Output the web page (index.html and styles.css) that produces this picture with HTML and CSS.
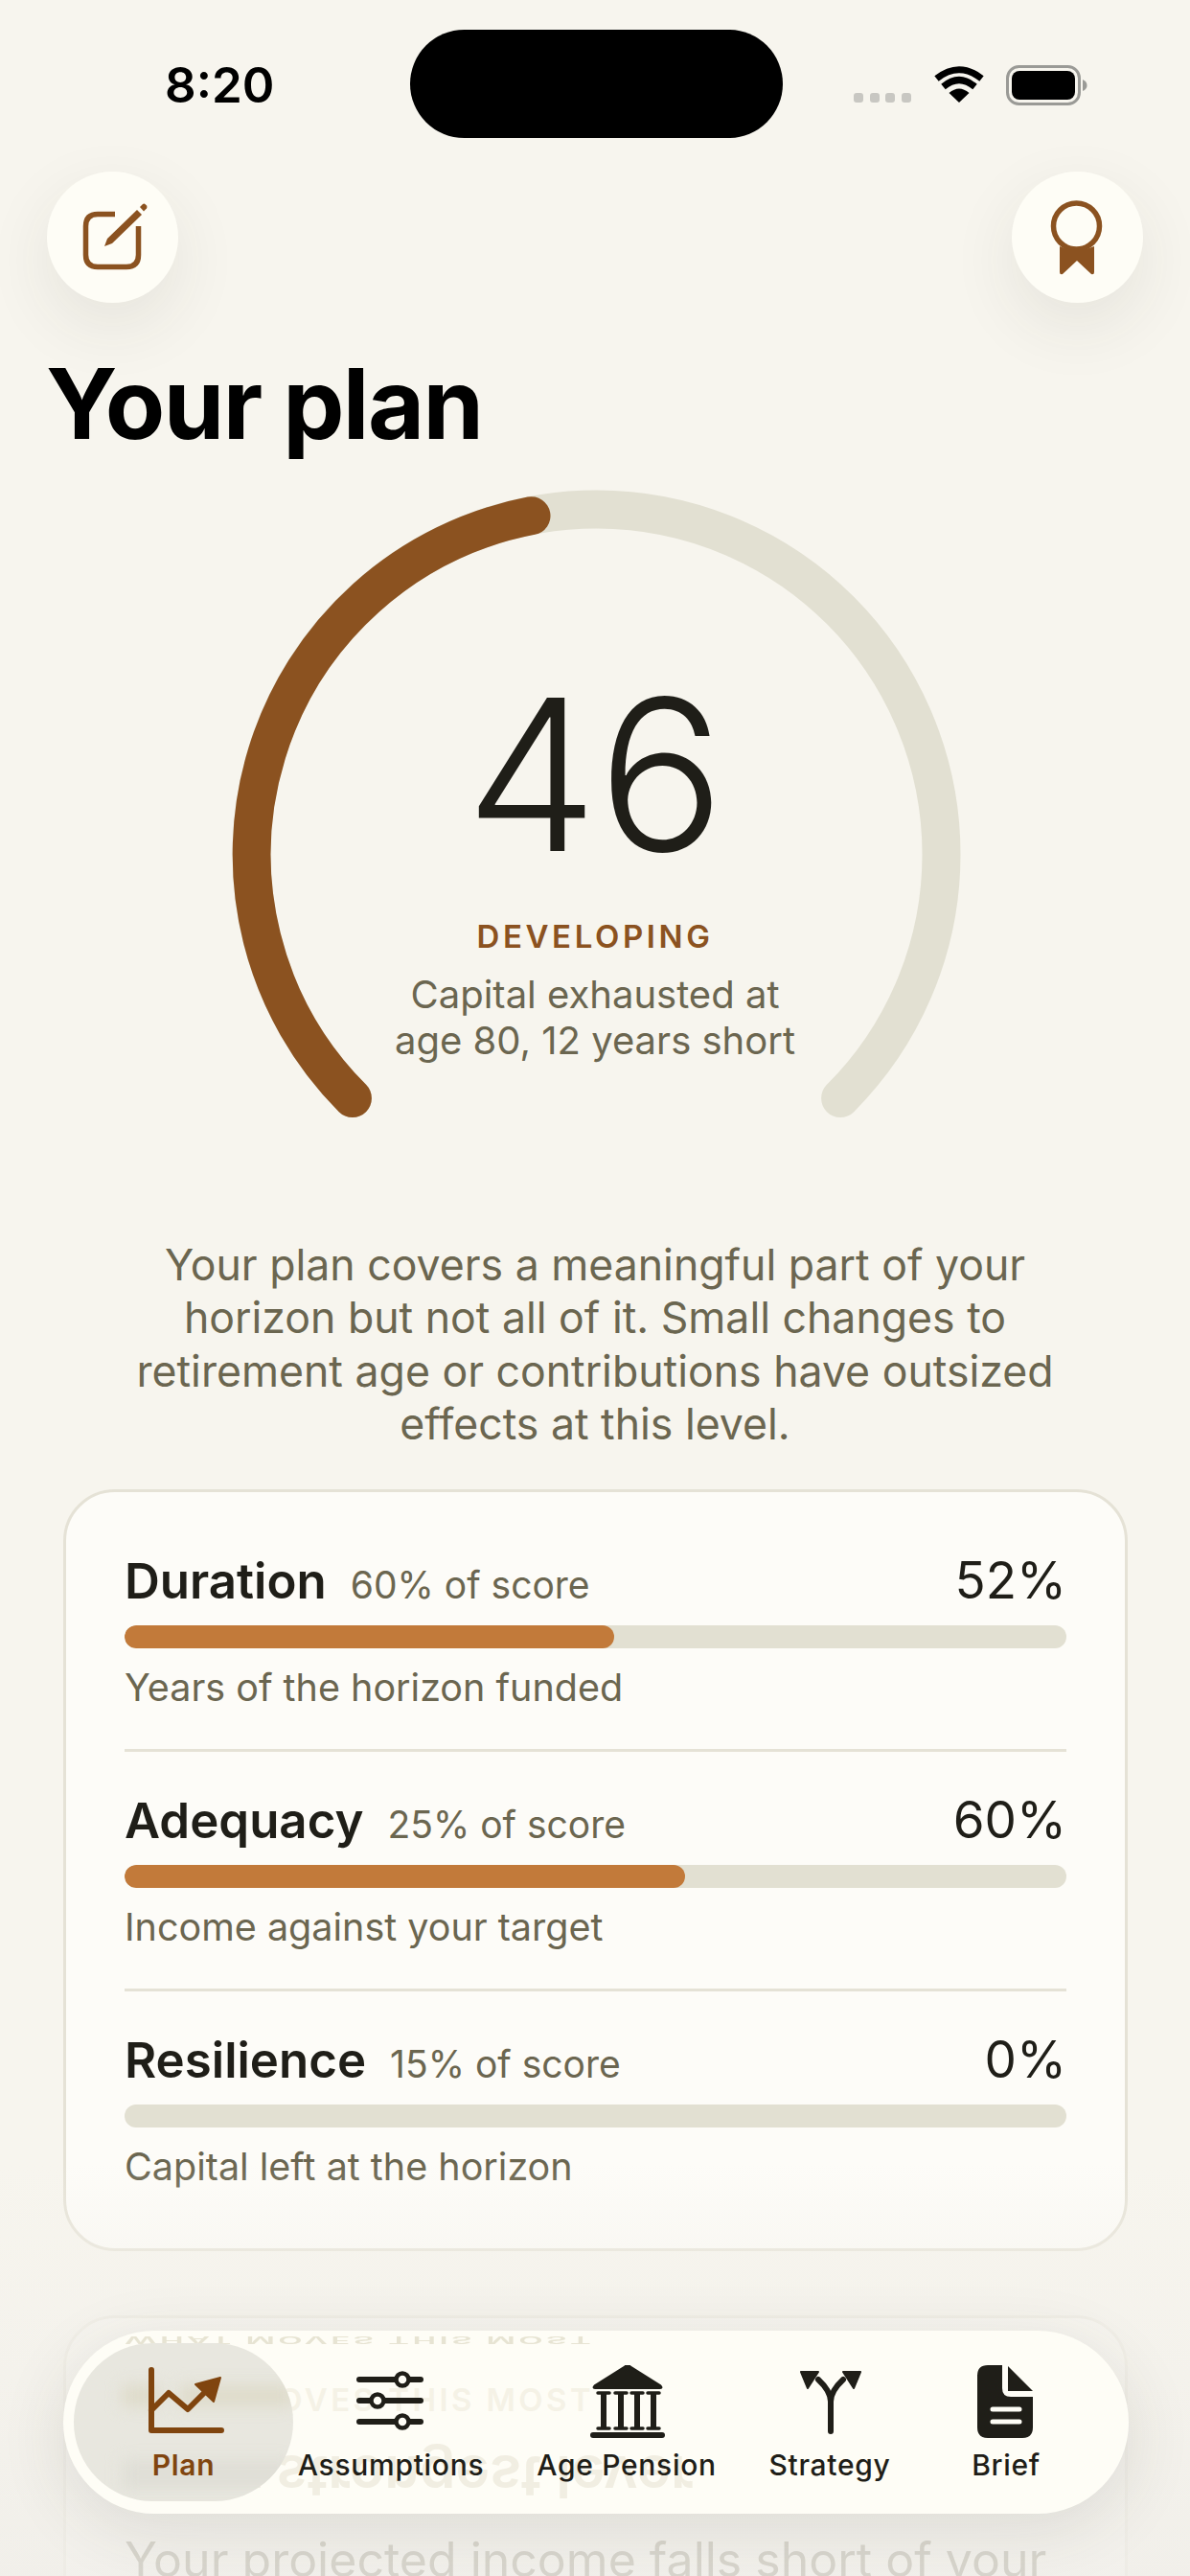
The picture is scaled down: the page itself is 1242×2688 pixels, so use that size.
FILE: index.html
```html
<!DOCTYPE html>
<html lang="en">
<head>
<meta charset="utf-8">
<title>Your plan</title>
<link rel="stylesheet" href="styles.css">
</head>
<body>
<div class="screen">
  <header class="status">
    <div class="time">8:20</div>
    <div class="island"></div>
    <div class="status-right">
      <div class="signal"><i></i><i></i><i></i><i></i></div>
      <svg class="wifi" width="54" height="40" viewBox="0 0 54 40">
        <path d="M27 38 L16.500 28 Q27 19 37.500 28 Z" fill="#000"/>
        <path d="M10.500 21.500 Q27 7.500 43.500 21.500" fill="none" stroke="#000" stroke-width="7"/>
        <path d="M3.500 13 Q27 -5.500 50.500 13" fill="none" stroke="#000" stroke-width="7"/>
      </svg>
      <svg class="battery" width="86" height="42" viewBox="0 0 86 42">
        <rect x="1.500" y="1.500" width="75" height="39" rx="12" fill="none" stroke="#9a9a96" stroke-width="3"/>
        <rect x="6" y="6" width="66" height="30" rx="8" fill="#000"/>
        <path d="M80 15 Q84.500 17 84.500 21 Q84.500 25 80 27 Z" fill="#9a9a96"/>
      </svg>
    </div>
  </header>

  <div class="actions">
    <button class="round-btn" aria-label="Edit">
      <svg width="137" height="137" viewBox="0 0 137 137">
        <path d="M71 44.500 H53 Q40.500 44.500 40.500 57 V87 Q40.500 99.500 53 99.500 H83 Q95.500 99.500 95.500 87 V57" fill="none" stroke="#8b5220" stroke-width="5.500"/>
        <path d="M60 78 L63 70 L94 40 L99 45 L68 75 Z" fill="#8b5220"/>
        <path d="M97 37 L100 34 Q101.500 33 103 34.500 L104 35.500 Q105 37 104 38.500 L101 41.500 Z" fill="#8b5220"/>
      </svg>
    </button>
    <button class="round-btn" aria-label="Achievements">
      <svg width="137" height="137" viewBox="0 0 137 137">
        <circle cx="67.500" cy="57" r="24" fill="none" stroke="#8b5220" stroke-width="5.500"/>
        <path d="M50 78 Q67.500 86 86 78 V105 Q86 108 83 107 L68 93 L53 107 Q50 108 50 105 Z" fill="#8b5220"/>
      </svg>
    </button>
  </div>

  <h1 class="title">Your plan</h1>

  <section class="gauge">
    <svg class="gauge-ring" width="800" height="700" viewBox="0 0 800 700">
      <path class="ring-track" d="M146.900 656 A360 360 0 1 1 656.100 656"/>
      <path class="ring-value" d="M146.900 656 A360 360 0 0 1 333.500 48.200"/>
    </svg>
    <div class="gauge-text">
      <div class="score">46</div>
      <div class="band">DEVELOPING</div>
      <div class="gauge-note">Capital exhausted at<br>age 80, 12 years short</div>
    </div>
  </section>

  <p class="summary">Your plan covers a meaningful part of your horizon but not all of it. Small changes to retirement age or contributions have outsized effects at this level.</p>

  <section class="card breakdown">
    <div class="row">
      <div class="row-head"><span class="row-name">Duration</span><span class="row-weight">60% of score</span><span class="row-value">52%</span></div>
      <div class="bar"><div class="bar-fill" style="width:52%"></div></div>
      <div class="row-desc">Years of the horizon funded</div>
    </div>
    <div class="row">
      <div class="row-head"><span class="row-name">Adequacy</span><span class="row-weight">25% of score</span><span class="row-value">60%</span></div>
      <div class="bar"><div class="bar-fill" style="width:59.500%"></div></div>
      <div class="row-desc">Income against your target</div>
    </div>
    <div class="row">
      <div class="row-head"><span class="row-name">Resilience</span><span class="row-weight">15% of score</span><span class="row-value">0%</span></div>
      <div class="bar"></div>
      <div class="row-desc">Capital left at the horizon</div>
    </div>
  </section>

  <section class="card lever">
    <div class="lever-label">WHAT MOVES THIS MOST</div>
    <h2 class="lever-title">Your strongest lever</h2>
    <p class="lever-body">Your projected income falls short of your</p>
  </section>

  <div class="fade"></div>

  <nav class="tabbar">
    <span class="ghost ghost-top" aria-hidden="true">WHAT MOVES THIS MOST</span>
    <span class="ghost ghost-mid" aria-hidden="true">WHAT MOVES THIS MOST</span>
    <span class="ghost ghost-low" aria-hidden="true">Your strongest lever</span>
    <div class="active-pill">
      <i class="smudge smudge-a"></i>
      <i class="smudge smudge-b"></i>
      <i class="smudge smudge-c"></i>
    </div>
    <a class="tab tab-active">
      <svg width="90" height="84" viewBox="0 0 90 84">
        <path d="M11 5 V68 H84" fill="none" stroke="#80450f" stroke-width="6" stroke-linecap="round" stroke-linejoin="round"/>
        <path d="M11 47 L29 29 L49 46 L69 26" fill="none" stroke="#80450f" stroke-width="6" stroke-linejoin="round" stroke-linecap="round"/>
        <path d="M57 20 L83 13 L76 38 Z" fill="#80450f" stroke="#80450f" stroke-width="2" stroke-linejoin="round"/>
      </svg>
      <span class="tab-label">Plan</span>
    </a>
    <a class="tab">
      <svg width="90" height="84" viewBox="0 0 90 84">
        <g stroke="#1f1e18" stroke-width="6" stroke-linecap="round">
          <path d="M12 15 H76"/><path d="M12 37 H76"/><path d="M12 59 H76"/>
        </g>
        <g fill="#fefdf6" stroke="#1f1e18" stroke-width="4.500">
          <circle cx="57" cy="15" r="6.500"/><circle cx="31" cy="37" r="6.500"/><circle cx="57" cy="59" r="6.500"/>
        </g>
      </svg>
      <span class="tab-label">Assumptions</span>
    </a>
    <a class="tab">
      <svg width="90" height="84" viewBox="0 0 90 84">
        <path d="M46 0 Q47 0 49 1.500 L80 21 Q83 24 80 24 H12 Q9 24 12 21 L43 1.500 Q45 0 46 0 Z" fill="#1f1e18" stroke="#1f1e18" stroke-width="2" stroke-linejoin="round"/>
        <g fill="none" stroke="#1f1e18">
          <path stroke-width="6" d="M21 28 V66 M39 28 V66 M56 28 V66 M73 28 V66"/>
          <path stroke-width="3.500" stroke-linecap="round" d="M15 29 H27 M33 29 H45 M50 29 H62 M67 29 H79 M15 66 H27 M33 66 H45 M50 66 H62 M67 66 H79"/>
          <path stroke-width="6" stroke-linecap="round" d="M10 73 H82"/>
        </g>
      </svg>
      <span class="tab-label">Age Pension</span>
    </a>
    <a class="tab">
      <svg width="90" height="84" viewBox="0 0 90 84">
        <path d="M46 69 V38 Q46 27 33 15 M46 38 Q46 27 59 15" fill="none" stroke="#1f1e18" stroke-width="6" stroke-linecap="round"/>
        <path d="M15 7 H33 L22 24 Z M77 7 H59 L70 24 Z" fill="#1f1e18" stroke="#1f1e18" stroke-width="2" stroke-linejoin="round"/>
      </svg>
      <span class="tab-label">Strategy</span>
    </a>
    <a class="tab">
      <svg width="90" height="84" viewBox="0 0 90 84">
        <path d="M26 0 H41 V24 Q41 33 50 33 H73 V65 Q73 76 62 76 H26 Q15 76 15 65 V11 Q15 0 26 0 Z" fill="#1f1e18"/>
        <path d="M47 1 L73 27 H47 Z" fill="#1f1e18"/>
        <path d="M31 46 H59 M31 59 H59" stroke="#fefdf6" stroke-width="5" stroke-linecap="round"/>
      </svg>
      <span class="tab-label">Brief</span>
    </a>
  </nav>
</div>
</body>
</html>
```
FILE: styles.css
```css
* { box-sizing: border-box; }
html, body { margin: 0; padding: 0; background: #f7f5ee; }
.screen {
  position: relative;
  width: 1242px;
  height: 2688px;
  overflow: hidden;
  background: #f7f5ee;
  font-family: Inter, "Liberation Sans", sans-serif;
  color: #1f1e18;
}

/* status bar */
.status {
  display: flex;
  align-items: center;
  height: 113px;
  padding-top: 31px;
  box-sizing: content-box;
}
.time {
  width: 428px;
  padding: 2px 0 0 172px;
  font-size: 51px;
  font-weight: 600;
  line-height: 1;
  color: #000;
}
.island { width: 389px; height: 113px; border-radius: 57px; background: #000; }
.status-right { display: flex; align-items: center; margin-top: 2px; padding-left: 74px; }
.signal { display: flex; gap: 6.500px; margin-top: 27px; margin-right: 23px; }
.signal i { display: block; width: 10px; height: 10px; border-radius: 3px; background: #c8c7c2; }
.wifi { display: block; margin-right: 22px; }
.battery { display: block; }

/* header buttons */
.actions { display: flex; justify-content: space-between; padding: 0 49px; margin-top: 35px; }
.round-btn {
  width: 137px;
  height: 137px;
  padding: 0;
  border: 0;
  border-radius: 50%;
  background: #fefdf6;
  box-shadow: 0 24px 70px rgba(60, 55, 40, 0.09);
}
.round-btn svg { display: block; }

.title {
  margin: 44px 0 0 48px;
  font-size: 102px;
  line-height: 122px;
  font-weight: 700;
  letter-spacing: -1.600px;
  color: #000;
}

/* gauge */
.gauge { position: relative; width: 800px; height: 700px; margin: 8px auto 0; }
.gauge-ring { display: block; }
.ring-track, .ring-value { fill: none; stroke-width: 40; stroke-linecap: round; }
.ring-track { stroke: #e2e0d2; }
.ring-value { stroke: #8b5220; }
.gauge-text { position: absolute; left: 0; right: 0; top: 198px; text-align: center; }
.score { font-size: 220px; line-height: 240px; font-weight: 300; color: #1f1e18; }
.band { margin-top: 29px; font-size: 33px; line-height: 40px; font-weight: 600; letter-spacing: 3.600px; color: #8b5220; }
.gauge-note { margin-top: 17px; font-size: 40px; line-height: 48px; color: #6b6650; }

.summary {
  margin: 103px 0 0;
  padding: 0 130px;
  text-align: center;
  font-size: 44.600px;
  line-height: 55.300px;
  color: #6b6650;
}

/* cards */
.card {
  margin: 40px 65px 0 66px;
  border: 3px solid #e5e2d6;
  border-radius: 54px;
  background: #fdfcf8;
}
.breakdown { padding: 21px 61px 0; height: 795px; }
.row { height: 250px; border-bottom: 3px solid #e5e2d6; }
.row:last-child { border-bottom: 0; }
.row-head { display: flex; align-items: baseline; height: 118px; padding-top: 38px; }
.row-name { font-size: 51px; line-height: 66px; font-weight: 600; }
.row-weight { margin-left: 25px; font-size: 39px; line-height: 66px; color: #6b6650; }
.row-value { margin-left: auto; font-size: 53px; line-height: 66px; font-weight: 400; }
.bar { height: 24px; border-radius: 12px; background: #e2e0d2; overflow: hidden; }
.bar-fill { height: 100%; border-radius: 12px; background: #c27a3a; }
.row-desc { margin-top: 16px; font-size: 39.500px; line-height: 50px; color: #6b6650; }

.lever { margin-top: 67px; height: 500px; padding: 64px 61px 0; }
.lever-label { font-size: 33px; line-height: 40px; font-weight: 600; letter-spacing: 3.400px; color: #8b5220; }
.lever-title { margin: 20px 0 0; font-size: 60px; line-height: 80px; font-weight: 600; }
.lever-body { margin: 18px 0 0; font-size: 50px; line-height: 60px; color: #6b6650; }

.fade {
  position: absolute;
  left: 0; right: 0; bottom: 0;
  height: 430px;
  background: linear-gradient(to bottom, rgba(247, 245, 238, 0) 0, rgba(244, 242, 236, 0.78) 40%, rgba(240, 238, 233, 0.82) 100%);
}

/* tab bar */
.tabbar {
  position: absolute;
  left: 66px;
  top: 2432px;
  width: 1112px;
  height: 191px;
  padding: 13px 0 0 11px;
  border-radius: 96px;
  background: #fefdf6;
  box-shadow: 0 16px 70px rgba(60, 55, 45, 0.12);
  display: grid;
  grid-template-columns: 229px 204px 288px 136px 232px;
  overflow: hidden;
}
.active-pill {
  position: absolute;
  left: 11px;
  top: 13px;
  width: 229px;
  height: 165px;
  border-radius: 83px;
  background: #e8e7df;
  overflow: hidden;
}
.tab { position: relative; display: flex; flex-direction: column; align-items: center; padding-top: 23px; }
.tab svg { display: block; height: 84px; }
.tab-label { margin-top: 1px; font-size: 30px; line-height: 38px; font-weight: 500; letter-spacing: 0.700px; color: #1f1e18; white-space: nowrap; }
.tab-active .tab-label { color: #80450f; font-weight: 600; }

.ghost { position: absolute; white-space: nowrap; }
.ghost-top { left: 64px; top: -10px; font-size: 33px; line-height: 40px; font-weight: 600; letter-spacing: 3.400px; color: #e7e4d3; transform: scaleY(-0.3); }
.ghost-mid { left: 64px; top: 52px; font-size: 33px; line-height: 40px; font-weight: 600; letter-spacing: 3.400px; color: #f5f2e6; }
.ghost-low { left: 73px; top: 118px; font-size: 60px; line-height: 70px; font-weight: 600; color: #f1eee2; transform: scaleY(-1); }
.smudge { position: absolute; display: block; filter: blur(8px); }
.smudge-a { left: 50px; top: 44px; width: 40px; height: 22px; background: #dedbca; }
.smudge-b { left: 110px; top: 44px; width: 120px; height: 22px; background: #dedbca; }
.smudge-c { left: 50px; top: 122px; width: 180px; height: 30px; background: #dfded6; }
```
